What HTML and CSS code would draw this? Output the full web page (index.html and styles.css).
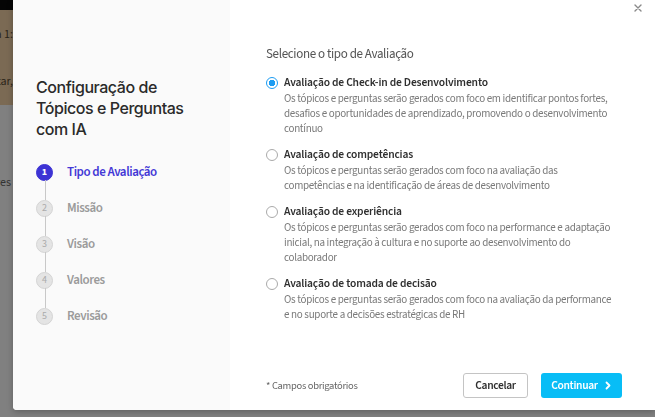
FILE: index.html
```html
<!DOCTYPE html>
<html lang="pt">
<head>
    <meta charset="UTF-8">
    <meta name="viewport" content="width=device-width, initial-scale=1.0">
    <title>Configuração de Tópicos e Perguntas com IA</title>
    <link rel="stylesheet" href="styles.css">
</head>
<body>
    <div class="pagina">
        <div class="topo"></div>
        <div class="faixa">
            <p class="faixa-linha">Etapa 1:</p>
            <p class="faixa-linha dois">Comece a editar,</p>
        </div>
        <div class="conteudo">
            <p class="conteudo-linha">Valores</p>
        </div>
    </div>

    <div class="modal">
        <aside class="lateral">
            <h1>Configuração de Tópicos e Perguntas com IA</h1>
            <ol class="etapas">
                <li class="etapa ativa"><span class="numero">1</span>Tipo de Avaliação</li>
                <li class="etapa"><span class="numero">2</span>Missão</li>
                <li class="etapa"><span class="numero">3</span>Visão</li>
                <li class="etapa"><span class="numero">4</span>Valores</li>
                <li class="etapa"><span class="numero">5</span>Revisão</li>
            </ol>
        </aside>

        <section class="principal">
            <button class="fechar" aria-label="Fechar">
                <svg width="8" height="8" viewBox="0 0 8 8"><path d="M1 1L7 7M7 1L1 7" stroke="#8a8a8a" stroke-width="1.4" stroke-linecap="round"/></svg>
            </button>

            <h2>Selecione o tipo de Avaliação</h2>

            <div class="opcoes">
                <label class="opcao">
                    <input type="radio" name="tipo" checked>
                    <span class="marca"></span>
                    <span class="texto">
                        <strong>Avaliação de Check-in de Desenvolvimento</strong>
                        <span class="descricao">Os tópicos e perguntas serão gerados com foco em identificar pontos fortes, desafios e oportunidades de aprendizado, promovendo o desenvolvimento contínuo</span>
                    </span>
                </label>
                <label class="opcao">
                    <input type="radio" name="tipo">
                    <span class="marca"></span>
                    <span class="texto">
                        <strong>Avaliação de competências</strong>
                        <span class="descricao">Os tópicos e perguntas serão gerados com foco na avaliação das competências e na identificação de áreas de desenvolvimento</span>
                    </span>
                </label>
                <label class="opcao">
                    <input type="radio" name="tipo">
                    <span class="marca"></span>
                    <span class="texto">
                        <strong>Avaliação de experiência</strong>
                        <span class="descricao">Os tópicos e perguntas serão gerados com foco na performance e adaptação inicial, na integração à cultura e no suporte ao desenvolvimento do colaborador</span>
                    </span>
                </label>
                <label class="opcao">
                    <input type="radio" name="tipo">
                    <span class="marca"></span>
                    <span class="texto">
                        <strong>Avaliação de tomada de decisão</strong>
                        <span class="descricao">Os tópicos e perguntas serão gerados com foco na avaliação da performance e no suporte a decisões estratégicas de RH</span>
                    </span>
                </label>
            </div>

            <footer class="rodape">
                <span class="obrigatorios">* Campos obrigatórios</span>
                <div class="acoes">
                    <button class="botao cancelar">Cancelar</button>
                    <button class="botao continuar">Continuar
                        <svg width="8" height="9" viewBox="0 0 8 9"><path d="M2.5 1.5L5.5 4.5L2.5 7.5" fill="none" stroke="#fff" stroke-width="1.8" stroke-linecap="round" stroke-linejoin="round"/></svg>
                    </button>
                </div>
            </footer>
        </section>
    </div>
</body>
</html>
```

FILE: styles.css
```css
body {
    margin: 0;
    font-family: "Source Sans 3", "Lato", sans-serif;
    background: #808080;
    overflow: hidden;
    height: 417px;
}

p {
    margin: 0;
}

/* pagina por tras do modal */
.pagina {
    display: flex;
    flex-direction: column;
}

.topo {
    height: 10px;
    background: #050505;
}

.faixa {
    height: 95px;
    background: #7b6a54;
    color: #2b2418;
    font-size: 12px;
    padding-top: 18px;
    box-sizing: border-box;
}

/* so o fim de cada linha aparece ao lado do modal */
.faixa-linha,
.conteudo-linha {
    width: 13px;
    display: flex;
    justify-content: flex-end;
    white-space: nowrap;
    line-height: 14px;
}

.faixa-linha.dois {
    margin-top: 33px;
}

.conteudo {
    font-size: 12px;
    color: #333;
    padding-top: 71px;
}

.conteudo-linha {
    width: 11px;
}

/* modal */
.modal {
    position: fixed;
    top: 0;
    left: 13px;
    width: 642px;
    height: 410px;
    display: flex;
    background: #fff;
    border-radius: 0 0 0 4px;
    overflow: hidden;
    box-shadow: 0 2px 6px rgba(0, 0, 0, 0.25);
}

.lateral {
    width: 217px;
    background: #fafafa;
    padding: 77px 0 0 23px;
    box-sizing: border-box;
}

.lateral h1 {
    margin: 0;
    font-family: "Inter", sans-serif;
    font-weight: 500;
    font-size: 16px;
    line-height: 21px;
    color: #2a2a2a;
    width: 170px;
    letter-spacing: -0.45px;
}

.etapas {
    list-style: none;
    margin: 14px 0 0;
    padding: 0;
}

.etapa {
    position: relative;
    display: flex;
    align-items: center;
    gap: 14px;
    height: 36px;
    font-size: 13px;
    font-weight: 600;
    letter-spacing: -0.45px;
    color: #9b9b9b;
}

.etapa:not(:last-child)::after {
    content: "";
    position: absolute;
    left: 9px;
    top: 26px;
    width: 1px;
    height: 20px;
    background: #c8c8c8;
}

.numero {
    width: 17px;
    height: 17px;
    border-radius: 50%;
    border: 1px solid #d4d4d4;
    background: #e4e4e4;
    color: #aaa;
    font-size: 10px;
    font-weight: 400;
    letter-spacing: 0;
    display: flex;
    align-items: center;
    justify-content: center;
    box-sizing: border-box;
}

.etapa.ativa {
    color: #4338d6;
}

.etapa.ativa .numero {
    background: #3d33d4;
    border-color: #3d33d4;
    color: #fff;
    font-weight: 700;
}

.principal {
    position: relative;
    flex: 1;
    padding: 45px 33px 12px 36px;
    display: flex;
    flex-direction: column;
}

.fechar {
    position: absolute;
    top: 4px;
    right: 13px;
    display: flex;
    background: none;
    border: 0;
    padding: 0;
}

.principal h2 {
    margin: 0;
    font-size: 13px;
    font-weight: 400;
    line-height: 18px;
    letter-spacing: -0.35px;
    color: #555;
}

.opcoes {
    display: flex;
    flex-direction: column;
    gap: 11px;
    margin-top: 12px;
}

.opcao {
    display: flex;
    gap: 6px;
    align-items: flex-start;
}

.opcao input {
    display: none;
}

.marca {
    width: 12px;
    height: 12px;
    border-radius: 50%;
    border: 1px solid #a9a9a9;
    box-sizing: border-box;
    margin-top: 2px;
    flex-shrink: 0;
    background: #fff;
}

.opcao input:checked + .marca {
    border: 1.5px solid #1c9cf2;
    background: radial-gradient(circle, #1c9cf2 0 3px, #fff 3.5px);
}

.texto {
    display: flex;
    flex-direction: column;
    width: 333px;
}

.texto strong {
    font-size: 11.5px;
    line-height: 16px;
    font-weight: 600;
    letter-spacing: -0.15px;
    color: #2f2f2f;
}

.descricao {
    font-size: 11px;
    line-height: 15px;
    letter-spacing: -0.3px;
    color: #7a7a7a;
}

.rodape {
    margin-top: auto;
    display: flex;
    align-items: center;
    justify-content: space-between;
}

.obrigatorios {
    font-size: 10.5px;
    letter-spacing: -0.3px;
    color: #666;
}

.acoes {
    display: flex;
    gap: 13px;
}

.botao {
    height: 25px;
    border-radius: 3px;
    font-family: "Source Sans 3", sans-serif;
    font-size: 11.5px;
    font-weight: 600;
    letter-spacing: -0.35px;
    display: flex;
    align-items: center;
    gap: 6px;
    box-sizing: border-box;
}

.cancelar {
    width: 65px;
    justify-content: center;
    background: #fff;
    border: 1px solid #c4c4c4;
    color: #2f2f2f;
}

.continuar {
    width: 81px;
    justify-content: center;
    background: #08bdf6;
    border: 0;
    color: #fff;
}
```
